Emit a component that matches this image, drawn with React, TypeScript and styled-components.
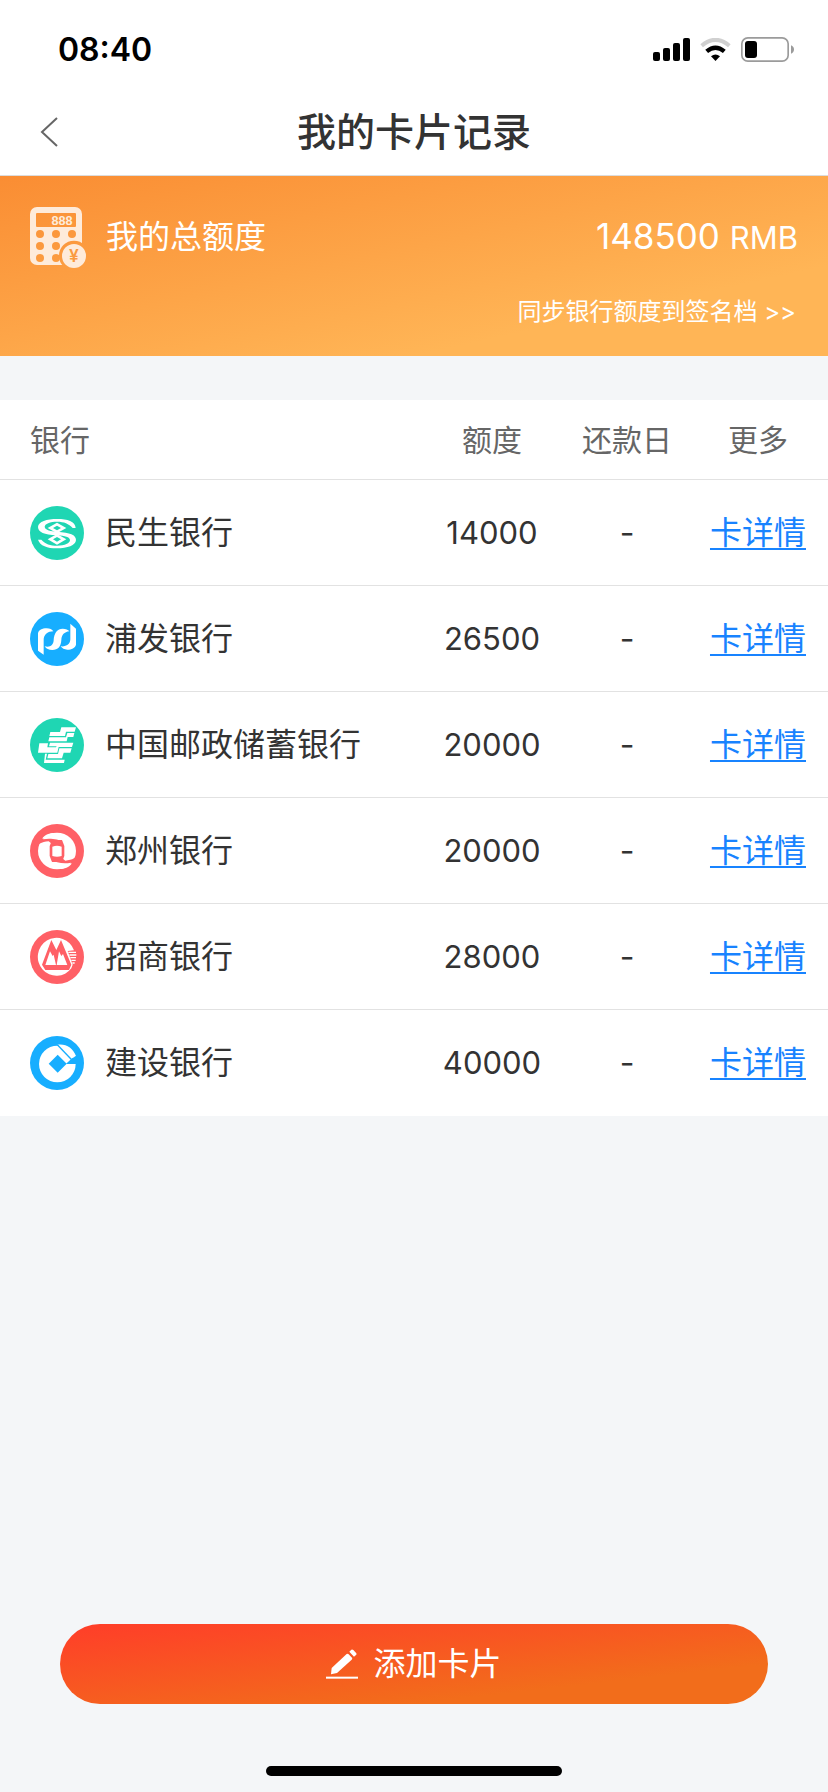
import type { ReactNode } from "react";
import styled, { createGlobalStyle } from "styled-components";

const GlobalStyle = createGlobalStyle`
  * {
    box-sizing: border-box;
  }
  body {
    margin: 0;
    background: #f4f6f8;
    color: #333;
    font-family: Inter, "Noto Sans CJK SC", sans-serif;
    font-size: 32px;
    line-height: 48px;
  }
`;

const Page = styled.div`
  display: flex;
  flex-direction: column;
  min-height: 100vh;
`;

const StatusBar = styled.div`
  display: flex;
  align-items: center;
  justify-content: space-between;
  height: 88px;
  padding: 10px 34px 0 58px;
  background: #fff;
  color: #000;
`;

const Clock = styled.time`
  padding-top: 2px;
  font-weight: 600;
`;

const StatusIcons = styled.div`
  display: flex;
  align-items: center;
  gap: 10px;
`;

const NavBar = styled.header`
  display: grid;
  grid-template-columns: 98px 1fr 98px;
  align-items: center;
  height: 88px;
  border-bottom: 1px solid #dcdcdc;
  background: #fff;
`;

const BackButton = styled.button`
  display: flex;
  align-items: center;
  height: 80px;
  padding: 0 0 0 40px;
  border: 0;
  background: none;
  color: #666;
`;

const Title = styled.h1`
  margin: 0;
  font-size: 39px;
  font-weight: 500;
  line-height: 56px;
  text-align: center;
`;

const Summary = styled.section`
  display: flex;
  flex-direction: column;
  gap: 30px;
  padding: 30px;
  background: linear-gradient(to bottom right, #fa8d33, #ffb556 75%);
  color: #fff;
`;

const SummaryRow = styled.div`
  display: flex;
  align-items: center;
  height: 62px;
  gap: 20px;
`;

const Total = styled.div`
  margin-left: auto;
  font-size: 35px;
`;

const Currency = styled.span`
  font-size: 31px;
`;

const SyncLink = styled.a`
  align-self: flex-end;
  padding-right: 2px;
  color: #fff;
  font-size: 24px;
  line-height: 28px;
  text-decoration: none;
`;

const CardTable = styled.table`
  width: 100%;
  margin-top: 44px;
  border-spacing: 0;
  table-layout: fixed;
  background: #fff;
`;

const Column = styled.col<{ $width?: number }>`
  width: ${({ $width }) => ($width ? `${$width}px` : "auto")};
`;

const HeadCell = styled.th<{ $start?: boolean }>`
  height: 80px;
  padding: 0 0 0 ${({ $start }) => ($start ? 30 : 0)}px;
  border-bottom: 1px solid #e2e2e2;
  color: #666;
  font-size: 30px;
  font-weight: 400;
  text-align: ${({ $start }) => ($start ? "left" : "center")};
`;

const Row = styled.tr`
  &:not(:last-child) > td {
    border-bottom: 1px solid #e2e2e2;
  }
`;

const Cell = styled.td<{ $numeric?: boolean }>`
  height: 106px;
  padding: 0;
  font-size: ${({ $numeric }) => ($numeric ? 31 : 32)}px;
  text-align: center;
`;

const Bank = styled.div`
  display: flex;
  align-items: center;
  gap: 21px;
  padding-left: 30px;
  white-space: nowrap;
`;

const DetailLink = styled.a`
  color: #1883ff;
  text-decoration: underline;
  text-decoration-thickness: 2px;
  text-underline-offset: 4px;
`;

const Footer = styled.footer`
  display: flex;
  flex-direction: column;
  align-items: center;
  gap: 62px;
  margin-top: auto;
  padding: 40px 60px 16px;
`;

const AddButton = styled.button`
  display: flex;
  align-items: center;
  justify-content: center;
  gap: 15px;
  width: 100%;
  height: 80px;
  padding: 0;
  border: 0;
  border-radius: 40px;
  background: linear-gradient(to bottom right, #ff3d29, #f26d1b 75%);
  color: #fff;
  font: inherit;
`;

const HomeIndicator = styled.div`
  width: 296px;
  height: 10px;
  border-radius: 5px;
  background: #000;
`;

const GREEN = "#1fd6b3";
const BLUE = "#17aeff";
const RED = "#ff6066";

function SignalIcon() {
  return (
    <svg width="37" height="23" viewBox="0 0 111 69" aria-hidden="true">
      <rect x="0" y="42" width="21" height="27" rx="6" />
      <rect x="30" y="30" width="21" height="39" rx="6" />
      <rect x="60" y="15" width="21" height="54" rx="6" />
      <rect x="90" y="0" width="21" height="69" rx="6" />
    </svg>
  );
}

function WifiIcon() {
  return (
    <svg width="31" height="23" viewBox="0 0 93 69" aria-hidden="true">
      <path d="M5 23Q46.500 -12 88 23" fill="none" stroke="#d0d0d0" strokeWidth="12" />
      <path d="M20 40Q46.500 18 73 40" fill="none" stroke="#000" strokeWidth="13" />
      <path d="M33 55Q46.500 44 60 55L46.500 69Z" />
    </svg>
  );
}

function BatteryIcon() {
  return (
    <svg width="53" height="25" viewBox="0 0 159 75" aria-hidden="true">
      <rect x="2.500" y="2.500" width="139" height="70" rx="18" fill="none" stroke="#9b9b9b" strokeWidth="5" />
      <rect x="12" y="12" width="36" height="51" rx="9" />
      <path d="M150 25Q159 29 159 37.500T150 50Z" fill="#9b9b9b" />
    </svg>
  );
}

function BackIcon() {
  return (
    <svg width="18" height="30" viewBox="0 0 18 30" fill="none" stroke="currentColor" strokeWidth="2" aria-hidden="true">
      <path d="M17 1L2 15L17 29" />
    </svg>
  );
}

function CalculatorIcon() {
  return (
    <svg width="56" height="61" viewBox="0 0 168 183" fill="#feebda" aria-hidden="true">
      <mask id="calculator-holes">
        <rect width="168" height="183" fill="#fff" />
        <rect x="18" y="18" width="120" height="42" rx="3" fill="#000" />
        {[81, 117, 153].map((cy) =>
          [30, 78, 126].map((cx) => <circle key={`${cx}-${cy}`} cx={cx} cy={cy} r="12" fill="#000" />),
        )}
        <circle cx="132" cy="146" r="45" fill="#000" />
      </mask>
      <rect width="156" height="174" rx="21" mask="url(#calculator-holes)" />
      <text x="128" y="53" fontFamily="Liberation Sans Narrow, Liberation Sans" fontSize="38" fontWeight="700" textAnchor="end">
        888
      </text>
      <circle cx="132" cy="147" r="36" />
      <text x="132" y="165" fill="#fa9a40" fontFamily="Inter" fontSize="52" fontWeight="600" textAnchor="middle">
        ¥
      </text>
    </svg>
  );
}

function PencilIcon() {
  return (
    <svg width="32" height="30" viewBox="0 0 96 90" fill="#fff" aria-hidden="true">
      <path d="M15 76L17 57L62 15Q65 13 68 16L78 26Q80 29 77 32L33 72Z" />
      <path d="M70 8L76 2Q79 0 82 3L91 13Q93 16 90 18L84 23Z" />
      <rect y="83" width="96" height="6" />
    </svg>
  );
}

function BankBadge({ color, children }: { color: string; children: ReactNode }) {
  return (
    <svg width="54" height="54" viewBox="0 0 162 162" fill="#fff" aria-hidden="true">
      <circle cx="81" cy="81" r="81" fill={color} />
      {children}
    </svg>
  );
}

const minsheng = (
  <BankBadge color={GREEN}>
    <path d="M137 66H128C116 53 102 47 82 47C60 47 44 53 44 63C46 73 62 76 82 77C120 80 138 86 138 102C137 118 113 127 80 127C52 127 30 119 24 101H34C46 114 60 119 82 119C104 119 120 112 120 102C119 93 106 90 80 88C42 85 25 80 24 63C25 47 50 39 82 39C112 39 136 46 137 66Z" />
    <path d="M53 66L81 50L109 66L81 82Z M69 66L81 73L93 66L81 59Z" fillRule="evenodd" />
    <path d="M53 100L81 84L109 100L81 116Z M69 100L81 107L93 100L81 93Z" fillRule="evenodd" />
  </BankBadge>
);

const pufa = (
  <BankBadge color={BLUE}>
    <path d="M24 64C26 54 36 49 50 49C60 49 66 53 70 58C54 58 41 68 41 84V128L24 116Z" />
    <path d="M44 103C60 107 70 100 71 85C72 63 82 50 98 50C108 50 114 53 118 58C103 60 95 68 94 84C93 104 84 114 67 114C56 114 49 111 44 103Z" />
    <path d="M121 35L138 50V98C135 108 125 113 112 113C103 113 96 109 92 103C108 105 121 97 121 82Z" />
  </BankBadge>
);

const postal = (
  <BankBadge color={GREEN}>
    <path d="M94 28H138L134 41H108L105 54H58L61 42H90Z" />
    <path d="M112 45H133L130 57H113L110 70H55L58 58H108Z" />
    <path d="M60 74H130L126 87H86L82 104H24L28 76H54L52 88H78L80 85H57Z" />
    <path d="M88 91H125L121 104H101L96 121H52L55 108H84Z" />
    <path d="M45 107H51L47 125H104L102 135H42Z" />
  </BankBadge>
);

const zhengzhou = (
  <BankBadge color={RED}>
    <ellipse cx="81" cy="81" rx="57" ry="55" />
    <path id="zhengzhou-cut" d="M16 74C22 62 34 53 56 52L66 60L98 54C86 46 60 42 40 46L34 28L14 50Z" fill={RED} />
    <path d="M146 88C140 100 128 109 106 110L96 102L64 108C76 116 102 120 122 116L128 134L148 112Z" fill={RED} />
    <path d="M66 48H96L103 66V96L96 114H66L59 96V66Z" fill={RED} />
    <path d="M67 68Q81 62 95 68V96Q81 101 67 96Z" />
    <path d="M36 44C46 30 62 26 76 27L96 34L72 40C58 38 48 39 36 44Z M126 118C116 132 100 136 86 135L66 128L90 122C104 124 114 123 126 118Z" />
  </BankBadge>
);

const zhaoshang = (
  <BankBadge color={RED}>
    <path d="M124 115A56 57 0 1 1 132 61L113 63L128 104Z" />
    <path d="M36 104L64 30L79 60L93 30L124 104L117 120H46Z" fill={RED} />
    <path d="M46 105L60 64L68 78L71 74L78 105Z M80 105L87 64L94 78L99 72L112 105Z" />
    <path d="M115 67H138M118 75H139M121 83H138M124 91H137M127 99H134" fill="none" stroke="#fff" strokeWidth="4" />
  </BankBadge>
);

const jianshe = (
  <BankBadge color={BLUE}>
    <circle cx="82" cy="84" r="55" />
    <path d="M82 26C108 22 129 36 138 60L126 67L96 36Z" />
    <path d="M108 84H140V60L126 67L110 82Z" fill={BLUE} />
    <path d="M83 56L110 83L83 110L56 83Z" fill={BLUE} />
    <path d="M82 26L125 71" fill="none" stroke={BLUE} strokeWidth="4" />
  </BankBadge>
);

const cards = [
  { name: "民生银行", limit: 14000, logo: minsheng },
  { name: "浦发银行", limit: 26500, logo: pufa },
  { name: "中国邮政储蓄银行", limit: 20000, logo: postal },
  { name: "郑州银行", limit: 20000, logo: zhengzhou },
  { name: "招商银行", limit: 28000, logo: zhaoshang },
  { name: "建设银行", limit: 40000, logo: jianshe },
];

export default function App() {
  return (
    <Page>
      <GlobalStyle />
      <StatusBar>
        <Clock>08:40</Clock>
        <StatusIcons>
          <SignalIcon />
          <WifiIcon />
          <BatteryIcon />
        </StatusIcons>
      </StatusBar>
      <NavBar>
        <BackButton type="button" aria-label="返回">
          <BackIcon />
        </BackButton>
        <Title>我的卡片记录</Title>
      </NavBar>
      <main>
        <Summary>
          <SummaryRow>
            <CalculatorIcon />
            <span>我的总额度</span>
            <Total>
              148500 <Currency>RMB</Currency>
            </Total>
          </SummaryRow>
          <SyncLink href="#sync">同步银行额度到签名档 &gt;&gt;</SyncLink>
        </Summary>
        <CardTable>
          <colgroup>
            <Column />
            <Column $width={148} />
            <Column $width={122} />
            <Column $width={140} />
          </colgroup>
          <thead>
            <tr>
              <HeadCell scope="col" $start>
                银行
              </HeadCell>
              <HeadCell scope="col">额度</HeadCell>
              <HeadCell scope="col">还款日</HeadCell>
              <HeadCell scope="col">更多</HeadCell>
            </tr>
          </thead>
          <tbody>
            {cards.map((card) => (
              <Row key={card.name}>
                <Cell>
                  <Bank>
                    {card.logo}
                    <span>{card.name}</span>
                  </Bank>
                </Cell>
                <Cell $numeric>{card.limit}</Cell>
                <Cell>-</Cell>
                <Cell>
                  <DetailLink href="#detail">卡详情</DetailLink>
                </Cell>
              </Row>
            ))}
          </tbody>
        </CardTable>
      </main>
      <Footer>
        <AddButton type="button">
          <PencilIcon />
          添加卡片
        </AddButton>
        <HomeIndicator />
      </Footer>
    </Page>
  );
}
